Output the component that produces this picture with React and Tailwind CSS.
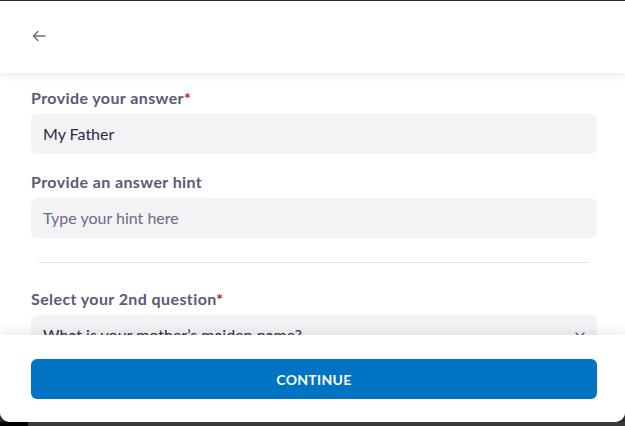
import React from "react";

function BackArrow() {
  return (
    <svg width="16" height="16" viewBox="0 0 16 16" fill="none" stroke="#6b6785" strokeWidth="1.4" strokeLinecap="round" strokeLinejoin="round">
      <path d="M14 8H2.5" />
      <path d="M7 3.5L2.5 8L7 12.5" />
    </svg>
  );
}

function Chevron() {
  return (
    <svg width="10" height="6" viewBox="0 0 10 6" fill="none" stroke="#5d5876" strokeWidth="1.4" strokeLinecap="round" strokeLinejoin="round">
      <path d="M1 1l4 4 4-4" />
    </svg>
  );
}

function Label({ children, required }) {
  return (
    <div className="text-[16px] leading-[20px] font-bold tracking-[0.4px] text-[#5d5876] mb-[6px]">
      {children}
      {required && <span className="text-[#c8102e]">*</span>}
    </div>
  );
}

export default function App() {
  return (
    <div className="w-[625px] h-[426px] bg-[#2b2b2b] pt-[1px] overflow-hidden" style={{ fontFamily: "Lato, 'Open Sans', sans-serif" }}>
      <div className="relative h-[421px] bg-white rounded-b-[10px] flex flex-col overflow-hidden">
        {/* header */}
        <div className="relative z-10 h-[72px] shrink-0 bg-white flex items-center px-[31px] pb-[2px] shadow-[0_3px_8px_rgba(0,0,0,0.08)]">
          <BackArrow />
        </div>

        {/* scroll content */}
        <div className="flex-1 overflow-hidden px-[31px] pt-[15px] pr-[28px]">
          <Label required>Provide your answer</Label>
          <div className="h-[40px] rounded-[6px] bg-[#f3f3f6] flex items-center px-[12px] text-[16px] text-[#2d2b45]">
            My Father
          </div>

          <div className="mt-[18px]">
            <Label>Provide an answer hint</Label>
            <div className="h-[40px] rounded-[6px] bg-[#f3f3f6] flex items-center px-[12px] text-[16px] text-[#6e6a85]">
              Type your hint here
            </div>
          </div>

          <div className="mx-[8px] mt-[24px] h-px bg-[#e4e4e8]" />

          <div className="mt-[26px]">
            <Label required>Select your 2nd question</Label>
            <div className="h-[40px] rounded-[6px] bg-[#f3f3f6] flex items-center justify-between px-[12px] text-[16px] text-[#2d2b45]">
              <span>What is your mother’s maiden name?</span>
              <Chevron />
            </div>
          </div>
        </div>

        {/* footer */}
        <div className="relative z-10 h-[87px] shrink-0 bg-white px-[31px] pr-[28px] pt-[24px] shadow-[0_-4px_10px_rgba(0,0,0,0.08)]">
          <button className="w-full h-[40px] rounded-[6px] bg-[#0074c2] text-white text-[14px] font-bold tracking-[0.3px]">
            CONTINUE
          </button>
        </div>
      </div>
      <div className="flex h-[4px]">
        <div className="w-[28px] bg-black" />
        <div className="flex-1 bg-[#3a3a3a]" />
      </div>
    </div>
  );
}
